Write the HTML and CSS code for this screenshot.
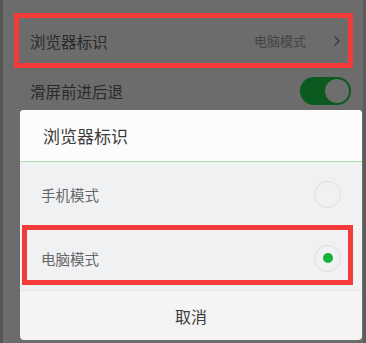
FILE: index.html
```html
<!DOCTYPE html>
<html>
<head>
<meta charset="utf-8">
<link rel="stylesheet" href="styles.css">
</head>
<body>
<div class="screen">
  <div class="settings">
    <div class="row row-marked">
      <span class="row-label">浏览器标识</span>
      <span class="row-value">电脑模式</span>
      <svg class="chev" width="8" height="12" viewBox="0 0 8 12"><path d="M1.5 1.5 L6 6 L1.5 10.5" fill="none" stroke="#3a3a3a" stroke-width="1.4"/></svg>
    </div>
    <div class="row row-plain">
      <span class="row-label">滑屏前进后退</span>
      <span class="toggle"><span class="knob"></span></span>
    </div>
  </div>
  <div class="dialog">
    <div class="dlg-title">浏览器标识</div>
    <div class="dlg-options">
      <div class="option">
        <span class="opt-label">手机模式</span>
        <span class="radio"></span>
      </div>
      <div class="option">
        <span class="opt-label">电脑模式</span>
        <span class="radio checked"><span class="dot"></span></span>
      </div>
    </div>
    <div class="dlg-cancel">取消</div>
    <div class="mark"></div>
  </div>
</div>
</body>
</html>
```

FILE: styles.css
```css
html, body {
  margin: 0;
  padding: 0;
}
body {
  width: 366px;
  height: 343px;
  overflow: hidden;
  font-family: "Noto Sans CJK SC", "Noto Sans", sans-serif;
}
.screen {
  position: relative;
  box-sizing: border-box;
  width: 366px;
  height: 343px;
  background: #6c6c6c;
  border-left: 3px solid #565656;
  border-right: 3px solid #5c5c5c;
}
.settings {
  padding: 13px 10px 0 11px;
}
.row {
  display: flex;
  align-items: center;
  box-sizing: border-box;
}
.row-marked {
  height: 55px;
  border: 5px solid #f53a3a;
  padding: 0 7px 0 11px;
}
.row-label {
  font-size: 15.5px;
  color: #2a2a2a;
  flex: 1;
}
.row-value {
  font-size: 13px;
  color: #444;
  margin-right: 27px;
}
.chev {
  display: block;
}
.row-plain {
  height: 46px;
  padding: 0 2px 0 16px;
}
.toggle {
  width: 51px;
  height: 28px;
  box-sizing: border-box;
  border-radius: 14px;
  background: #0b5a1f;
  display: flex;
  align-items: center;
  justify-content: flex-end;
  padding-right: 2px;
}
.knob {
  width: 24px;
  height: 24px;
  border-radius: 50%;
  background: #6e6e6e;
}
.dialog {
  position: absolute;
  left: 17px;
  top: 110px;
  width: 342px;
  height: 230px;
  border-radius: 4px;
  overflow: hidden;
  background: #f4f4f4;
  display: flex;
  flex-direction: column;
}
.dlg-title {
  height: 52px;
  box-sizing: border-box;
  background: #fcfcfc;
  border-bottom: 1px solid #a6dfae;
  padding-left: 23px;
  display: flex;
  align-items: center;
  font-size: 17px;
  color: #3c3c3c;
}
.dlg-options {
  background: #f0f1f3;
  border-bottom: 1px solid #e6e6e6;
}
.option {
  height: 64px;
  display: flex;
  align-items: center;
  padding: 0 21px 0 21px;
}
.opt-label {
  flex: 1;
  font-size: 14.5px;
  color: #666;
}
.radio {
  width: 27px;
  height: 27px;
  box-sizing: border-box;
  border: 1px solid #dedede;
  border-radius: 50%;
  display: flex;
  align-items: center;
  justify-content: center;
}
.dot {
  width: 10px;
  height: 10px;
  border-radius: 50%;
  background: #16b23a;
}
.dlg-cancel {
  flex: 1;
  display: flex;
  align-items: center;
  justify-content: center;
  font-size: 16px;
  color: #3c3c3c;
}
.mark {
  position: absolute;
  left: 2px;
  top: 115px;
  width: 331px;
  height: 60px;
  box-sizing: border-box;
  border: 5px solid #f53a3a;
}
```
